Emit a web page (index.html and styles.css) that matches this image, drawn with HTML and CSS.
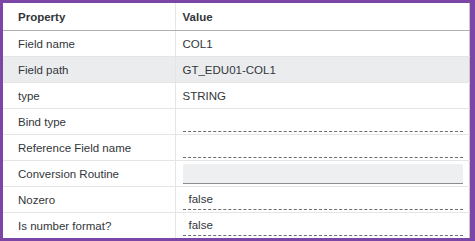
FILE: index.html
```html
<!DOCTYPE html>
<html>
<head>
<meta charset="utf-8">
<link rel="stylesheet" href="styles.css">
</head>
<body>
<div class="frame">
  <table class="props">
    <colgroup><col class="c1"><col class="c2"></colgroup>
    <thead>
      <tr><th>Property</th><th>Value</th></tr>
    </thead>
    <tbody>
      <tr><td>Field name</td><td class="val">COL1</td></tr>
      <tr class="sel"><td>Field path</td><td class="val">GT_EDU01-COL1</td></tr>
      <tr><td>type</td><td class="val">STRING</td></tr>
      <tr><td>Bind type</td><td class="val"><div class="inp"></div></td></tr>
      <tr><td>Reference Field name</td><td class="val"><div class="inp"></div></td></tr>
      <tr><td>Conversion Routine</td><td class="val"><div class="inp ro"></div></td></tr>
      <tr><td>Nozero</td><td class="val"><div class="inp">false</div></td></tr>
      <tr><td>Is number format?</td><td class="val"><div class="inp">false</div></td></tr>
    </tbody>
  </table>
</div>
</body>
</html>
```
FILE: styles.css
```css
html, body { margin: 0; padding: 0; background: #fff; }
.frame {
  box-sizing: border-box;
  width: 475px;
  height: 241px;
  border: 3px solid #7b46a6;
  border-right-width: 5px;
  overflow: hidden;
}
.props {
  width: 100%;
  border-collapse: collapse;
  table-layout: fixed;
  font-family: "Liberation Sans", Arial, sans-serif;
  font-size: 11.5px;
  color: #32363a;
  border-right: 1px solid #c8c8c8;
}
.c1 { width: 172px; }
.props th {
  height: 27px;
  text-align: left;
  font-weight: bold;
  padding: 0 0 0 15px;
  border-bottom: 1px solid #b0b0b0;
  vertical-align: middle;
}
.props th + th, .props td + td { border-left: 1px solid #e5e5e5; padding-left: 7px; }
.props td {
  height: 25px;
  padding: 0 0 0 15px;
  border-bottom: 1px solid #e5e5e5;
  vertical-align: middle;
  white-space: nowrap;
}
.props tbody tr:last-child td { border-bottom: none; }
.props tr.sel td { background: #ebecee; }
.props td.val { padding-right: 6px; }
.inp {
  box-sizing: border-box;
  height: 20px;
  line-height: 18px;
  padding-left: 6px;
  border-bottom: 1px dashed #6a6d70;
  margin-top: 0;
}
.inp.ro {
  background: #eeeff1;
  border-bottom: 1px solid #8c8c8c;
  border-radius: 2px 2px 0 0;
}
```
